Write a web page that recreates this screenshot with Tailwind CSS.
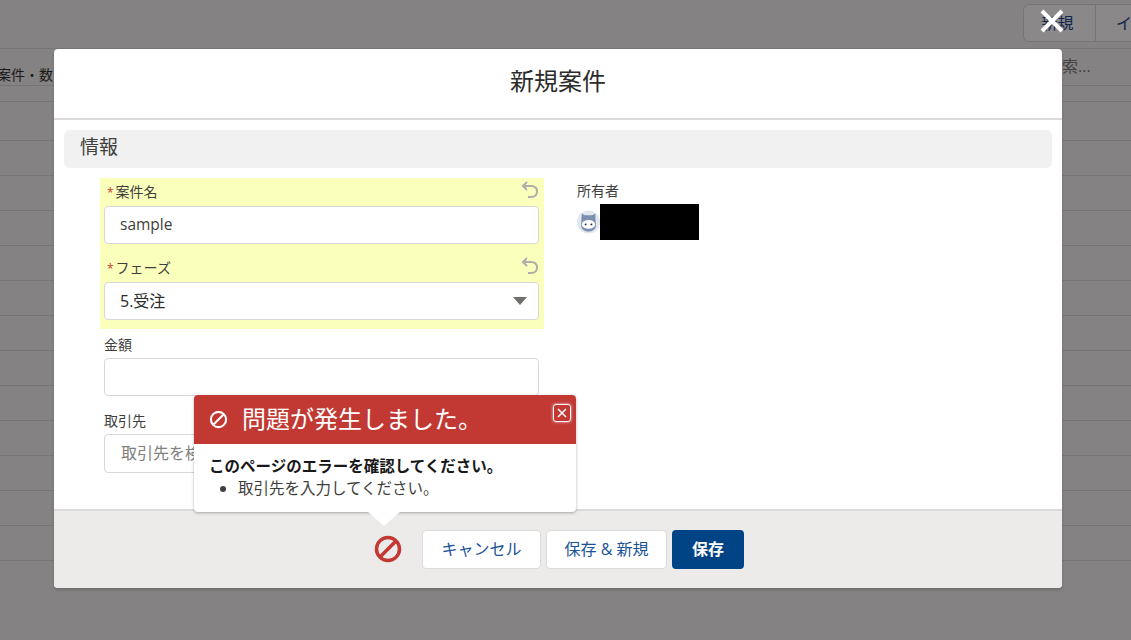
<!DOCTYPE html>
<html class="h-full">
  <head>
    <meta charset="UTF-8" />
    <title>新規案件</title>
    <script src="https://cdn.jsdelivr.net/npm/@tailwindcss/browser@4"></script>
  </head>
  <body class="h-full overflow-hidden bg-[#848282] font-['Open_Sans','Noto_Sans_CJK_JP',sans-serif] text-[#181818]">
    <div class="relative h-[640px] w-[1131px] overflow-hidden">
      <!-- page behind the overlay -->
      <div class="flex h-[49px] justify-end border-b border-[#767474] pt-[4px]">
        <div class="flex h-[38px] w-[120px] -mr-[12px] rounded-l-[6px] border border-[#767474] bg-[#8a8888] text-[16px] text-[#12264f]">
          <span class="flex w-[72px] items-center justify-center border-r border-[#767474] pr-[4px]">新規</span>
          <span class="flex items-center pl-[20px]">イ</span>
        </div>
      </div>
      <div class="relative h-[37px] border-b border-[#767474]">
        <span class="absolute top-[16px] left-[-3px] text-[14px] leading-[20px] text-[#1a1a1a]">案件・数え</span>
        <span class="absolute top-[6px] left-[1062px] text-[16px] leading-[22px] text-[#444]">索...</span>
      </div>
      <div class="h-[16px] border-b border-[#767474]"></div>
      <div class="h-[39px] border-b border-[#767474]"></div>
      <div class="h-[35px] border-b border-[#767474]"></div>
      <div class="h-[35px] border-b border-[#767474]"></div>
      <div class="h-[35px] border-b border-[#767474]"></div>
      <div class="h-[35px] border-b border-[#767474]"></div>
      <div class="h-[35px] border-b border-[#767474]"></div>
      <div class="h-[35px] border-b border-[#767474]"></div>
      <div class="h-[35px] border-b border-[#767474]"></div>
      <div class="h-[35px] border-b border-[#767474]"></div>
      <div class="h-[35px] border-b border-[#767474]"></div>
      <div class="h-[35px] border-b border-[#767474]"></div>
      <div class="h-[35px] border-b border-[#767474]"></div>
      <div class="h-[35px] border-b border-[#767474]"></div>

      <!-- close X -->
      <svg class="absolute left-[1040px] top-[9px] h-[24px] w-[24px]" viewBox="0 0 24 24" fill="none" stroke="#fff" stroke-width="4">
        <path d="M2 2 L22 22 M22 2 L2 22" />
      </svg>

      <!-- modal -->
      <div class="absolute left-[54px] top-[49px] flex h-[539px] w-[1008px] flex-col overflow-hidden rounded-[4px] bg-white shadow-[0_2px_3px_rgba(0,0,0,0.16)]">
        <div class="flex h-[71px] shrink-0 items-center justify-center border-b-2 border-[#dddbda] pb-[5px] text-[24px] text-[#2b2b2b]">新規案件</div>
        <div class="flex-1 px-[10px] pt-[10px]">
          <div class="flex h-[38px] items-center rounded-[6px] bg-[#f1f1f1] pb-[4px] pl-[16px] text-[19px] text-[#3e3e3c]">情報</div>
          <div class="mt-[10px] flex pl-[36px]">
            <div class="w-[444px]">
              <div class="h-[151px] bg-[#fbffbc] pl-[4px] pr-[5px] pt-[4px]">
                <div class="flex h-[24px] items-start justify-between pl-[3px] text-[14px] leading-[20px] text-[#3e3e3c]">
                  <span><span class="mr-[2px] text-[12px] text-[#c23934]">*</span>案件名</span>
                  <svg class="-mt-[1px] h-[18px] w-[18px]" viewBox="0 0 18 18" fill="none" stroke="#b0adab" stroke-width="2"><path d="M6 1 L2 5 L6 9 M3 5 H10 C13.500 5 16 7 16 10.500 C16 14 13.500 16 10 16 H7" /></svg>
                </div>
                <div class="flex h-[38px] items-center rounded-[4px] border border-[#d8d8d8] bg-white pl-[15px] text-[15.500px] text-[#3e3e3c]">sample</div>
                <div class="mt-[14px] flex h-[24px] items-start justify-between pl-[3px] text-[14px] leading-[20px] text-[#3e3e3c]">
                  <span><span class="mr-[2px] text-[12px] text-[#c23934]">*</span>フェーズ</span>
                  <svg class="-mt-[1px] h-[18px] w-[18px]" viewBox="0 0 18 18" fill="none" stroke="#b0adab" stroke-width="2"><path d="M6 1 L2 5 L6 9 M3 5 H10 C13.500 5 16 7 16 10.500 C16 14 13.500 16 10 16 H7" /></svg>
                </div>
                <div class="flex h-[38px] items-center justify-between rounded-[4px] border border-[#d8d8d8] bg-white pl-[15px] pr-[11px] text-[16px] text-[#2b2b2b]">
                  <span>5.受注</span>
                  <svg class="h-[8px] w-[14px]" viewBox="0 0 14 8" fill="#706e6b"><path d="M0 0 H14 L7 8 Z" /></svg>
                </div>
              </div>
              <div class="pl-[4px] pr-[5px] pt-[5px]">
                <div class="h-[24px] text-[14px] leading-[22px] text-[#3e3e3c]">金額</div>
                <div class="h-[38px] rounded-[4px] border border-[#d8d8d8] bg-white"></div>
                <div class="mt-[15px] h-[23px] text-[14px] leading-[20px] text-[#3e3e3c]">取引先</div>
                <div class="flex h-[39px] items-center rounded-[4px] border border-[#d8d8d8] bg-white pb-[2px] pl-[16px] text-[16px] text-[#80807e]">取引先を検索...</div>
              </div>
            </div>
            <div class="ml-[33px] pt-[4px]">
              <div class="text-[14px] leading-[18px] text-[#3e3e3c]">所有者</div>
              <div class="mt-[4px] flex items-start">
                <svg class="mt-[6px] h-[24px] w-[23px]" viewBox="0 0 24 24">
                  <circle cx="12" cy="12" r="12" fill="#e3e7ee" />
                  <path d="M5 3 L8 5 H16 L19 3 L19.500 12 C21 19 17 22 12 22 C7 22 3 19 4.500 12 Z" fill="#7c8fb0" />
                  <ellipse cx="12" cy="14.500" rx="7" ry="4.500" fill="#fff" />
                  <circle cx="9" cy="14.500" r="1" fill="#1d2b45" />
                  <circle cx="15" cy="14.500" r="1" fill="#1d2b45" />
                </svg>
                <div class="h-[36px] w-[99px] bg-black"></div>
              </div>
            </div>
          </div>
        </div>
        <div class="flex h-[79px] shrink-0 items-start justify-center gap-[5px] border-t-2 border-[#dddbda] bg-[#ecebea] pl-[2px] pt-[19px] text-[16px]">
          <svg class="mr-[15px] mt-[5px] h-[28px] w-[28px]" viewBox="0 0 28 28" fill="none" stroke="#c23934" stroke-width="3.500">
            <circle cx="14" cy="14" r="11.500" />
            <path d="M6 22 L22 6" />
          </svg>
          <button class="h-[39px] w-[119px] rounded-[4px] border border-[#dddbda] bg-white pb-[2px] text-[#1b5297]">キャンセル</button>
          <button class="h-[39px] w-[121px] rounded-[4px] border border-[#dddbda] bg-white pb-[2px] text-[#1b5297]">保存 &amp; 新規</button>
          <button class="h-[39px] w-[72px] rounded-[4px] bg-[#014486] pb-[2px] font-bold text-white">保存</button>
        </div>
      </div>

      <!-- error popover -->
      <div class="absolute left-[194px] top-[395px] w-[382px] rounded-[4px] bg-white shadow-[0_1px_3px_rgba(0,0,0,0.3)]">
        <div class="relative flex h-[49px] items-center rounded-t-[4px] bg-[#c23934] pb-[2px] pl-[15px] text-[24px] text-white">
          <svg class="mr-[14px] mt-[2px] h-[19px] w-[19px]" viewBox="0 0 20 20" fill="none" stroke="#fff" stroke-width="2.200">
            <circle cx="10" cy="10" r="8" />
            <path d="M4.500 15.500 L15.500 4.500" />
          </svg>
          問題が発生しました。
          <div class="absolute right-[5px] top-[9px] flex h-[18px] w-[18px] items-center justify-center rounded-[3px] border border-white shadow-[0_0_3px_rgba(255,255,255,0.8)]">
            <svg class="h-[10px] w-[10px]" viewBox="0 0 10 10" fill="none" stroke="#fff" stroke-width="1.500"><path d="M1 1 L9 9 M9 1 L1 9" /></svg>
          </div>
        </div>
        <div class="h-[68px] px-[15px] pt-[11px] text-[15.500px] leading-[22px]">
          <div class="font-bold text-[#181818]">このページのエラーを確認してください。</div>
          <ul class="list-disc pl-[29px] text-[#3e3e3c]">
            <li>取引先を入力してください。</li>
          </ul>
        </div>
        <div class="absolute bottom-[-14px] left-[173px] h-0 w-0 border-x-[17px] border-t-[15px] border-x-transparent border-t-white"></div>
      </div>
    </div>
  </body>
</html>
